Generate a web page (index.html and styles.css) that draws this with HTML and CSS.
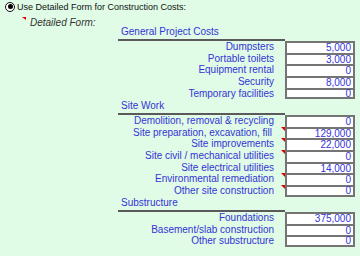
FILE: index.html
```html
<!DOCTYPE html>
<html>
<head>
<meta charset="utf-8">
<link rel="stylesheet" href="styles.css">
</head>
<body>
<div class="page">
  <div class="opt">
    <span class="radio"><span class="dot"></span></span>
    <span class="opt-label">Use Detailed Form for Construction Costs:</span>
  </div>
  <div class="form-title"><span class="tri tri-title"></span><span class="title">Detailed Form:</span></div>
  <div class="sheet">
    <div class="hdr">General Project Costs</div>
    <div class="lbl">Dumpsters</div><div class="val">5,000</div>
    <div class="lbl">Portable toilets</div><div class="val">3,000</div>
    <div class="lbl">Equipment rental</div><div class="val">0</div>
    <div class="lbl">Security</div><div class="val">8,000</div>
    <div class="lbl">Temporary facilities</div><div class="val last">0</div>

    <div class="hdr">Site Work</div>
    <div class="lbl">Demolition, removal &amp; recycling</div><div class="val">0</div>
    <div class="lbl note pad">Site preparation, excavation, fill<span class="tri"></span></div><div class="val">129,000</div>
    <div class="lbl note">Site improvements<span class="tri"></span></div><div class="val">22,000</div>
    <div class="lbl note">Site civil / mechanical utilities<span class="tri"></span></div><div class="val">0</div>
    <div class="lbl">Site electrical utilities</div><div class="val">14,000</div>
    <div class="lbl note">Environmental remediation<span class="tri"></span></div><div class="val">0</div>
    <div class="lbl note">Other site construction<span class="tri"></span></div><div class="val last">0</div>

    <div class="hdr">Substructure</div>
    <div class="lbl">Foundations</div><div class="val">375,000</div>
    <div class="lbl">Basement/slab construction</div><div class="val">0</div>
    <div class="lbl">Other substructure</div><div class="val last">0</div>
  </div>
</div>
</body>
</html>
```

FILE: styles.css
```css
html, body {
  margin: 0;
  padding: 0;
  background: #e0fbe6;
}

.page {
  width: 360px;
  height: 256px;
  overflow: hidden;
  font-family: "Liberation Sans", Arial, sans-serif;
}

.opt {
  height: 13px;
  display: flex;
  align-items: center;
}

.radio {
  margin-left: 5px;
  width: 10px;
  height: 10px;
  box-sizing: border-box;
  border: 1px solid #111;
  border-radius: 50%;
  background: #fff;
  display: flex;
  align-items: center;
  justify-content: center;
}

.dot {
  width: 5px;
  height: 5px;
  border-radius: 50%;
  background: #000;
}

.opt-label {
  margin-left: 2px;
  font-size: 9px;
  color: #111;
  white-space: nowrap;
}

.form-title {
  height: 12.33px;
  box-sizing: border-box;
  padding-top: 3.8px;
  padding-left: 22px;
  display: flex;
  align-items: flex-start;
  line-height: 11.5px;
}

.title {
  margin-left: 4px;
  font-size: 10px;
  font-style: italic;
  color: #333;
}

.tri {
  width: 0;
  height: 0;
  border-top: 3px solid #e00000;
  border-left: 4px solid transparent;
}

.sheet {
  margin-left: 118px;
  width: 237px;
  display: grid;
  grid-template-columns: 167px 70px;
  font-size: 10px;
  color: #3434d8;
}

.hdr {
  grid-column: 1 / 3;
  height: 15.67px;
  box-sizing: border-box;
  width: 167px;
  border-bottom: 2px solid #5a5a5a;
  padding-left: 3px;
  padding-bottom: 1px;
  display: flex;
  align-items: flex-end;
  line-height: 12px;
}

.lbl {
  position: relative;
  height: 11.67px;
  line-height: 11.67px;
  text-align: right;
  padding-right: 11px;
  white-space: nowrap;
}

.lbl.pad {
  padding-right: 13px;
}

.lbl .tri {
  position: absolute;
  top: 0;
  right: 0;
  border-top-width: 4px;
  border-left-width: 4px;
}

.val {
  height: 11.67px;
  line-height: 9px;
  box-sizing: border-box;
  background: #fff;
  border: 2px solid #747474;
  border-bottom: none;
  text-align: right;
  padding-right: 2px;
}

.val.last {
  border-bottom: 2px solid #747474;
  line-height: 8px;
}
```
